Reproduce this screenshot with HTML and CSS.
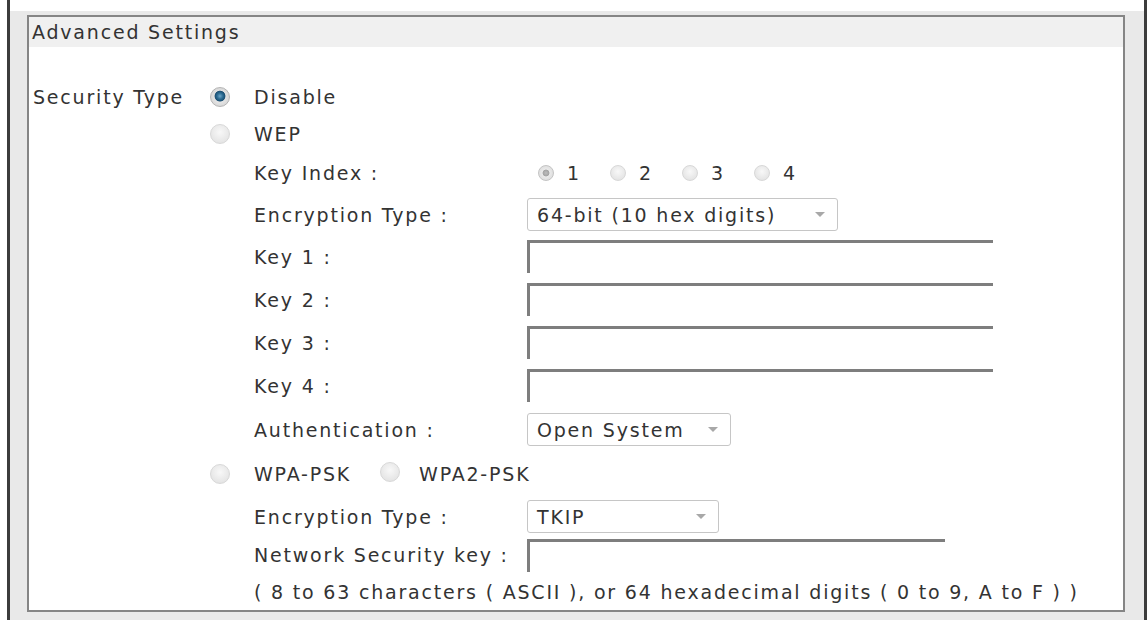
FILE: index.html
```html
<!DOCTYPE html>
<html>
<head>
    <title>Advanced Settings</title>
    <link rel="stylesheet" href="styles.css">
</head>
<body>
    <div class="page">
        <div class="panel">
            <div class="panelTitle">Advanced Settings</div>
            <form class="settings">
                <span class="c1 fieldName">Security Type</span>
                <input type="radio" name="security" class="c2 radio" checked>
                <span class="wide">Disable</span>

                <input type="radio" name="security" class="c2 radio">
                <span class="c3">WEP</span>

                <span class="c3">Key Index :</span>
                <div class="c4 keyIndex">
                    <label><input type="radio" name="keyIndex" class="radio small" checked disabled>1</label>
                    <label><input type="radio" name="keyIndex" class="radio small" disabled>2</label>
                    <label><input type="radio" name="keyIndex" class="radio small" disabled>3</label>
                    <label><input type="radio" name="keyIndex" class="radio small" disabled>4</label>
                </div>

                <span class="c3">Encryption Type :</span>
                <div class="c4 select wepType"><span>64-bit (10 hex digits)</span><i class="caret"></i></div>

                <span class="c3">Key 1 :</span>
                <input type="text" class="c4 keyField">
                <span class="c3">Key 2 :</span>
                <input type="text" class="c4 keyField">
                <span class="c3">Key 3 :</span>
                <input type="text" class="c4 keyField">
                <span class="c3">Key 4 :</span>
                <input type="text" class="c4 keyField">

                <span class="c3">Authentication :</span>
                <div class="c4 select authType"><span>Open System</span><i class="caret"></i></div>

                <input type="radio" name="security" class="c2 radio">
                <div class="wide wpaModes">
                    <span>WPA-PSK</span>
                    <input type="radio" name="wpaMode" class="radio">
                    <span>WPA2-PSK</span>
                </div>

                <span class="c3">Encryption Type :</span>
                <div class="c4 select wpaType"><span>TKIP</span><i class="caret"></i></div>

                <span class="c3">Network Security key :</span>
                <input type="text" class="c4 keyField pskField">

                <span class="wide note">( 8 to 63 characters ( ASCII ), or 64 hexadecimal digits ( 0 to 9, A to F ) )</span>
            </form>
        </div>
    </div>
</body>
</html>
```

FILE: styles.css
```css
body{
    margin: 0px;
    background-color: white;
    font-family: "DejaVu Sans", Verdana, sans-serif;
    font-size: 19px;
    letter-spacing: 1.8px;
    color: #333333;
}

.page{
    width: 1140px;
    height: 620px;
    box-sizing: border-box;
    margin-left: 7px;
    padding: 15px 19px 8px 17px;
    border-left: 3px solid #3c3c3c;
    border-right: 3px solid #3c3c3c;
    background: linear-gradient(white, white) top / 100% 11px no-repeat, #e9e9e9;
}

.panel{
    height: 597px;
    box-sizing: border-box;
    border: 2px solid #858585;
    background-color: white;
}

.panelTitle{
    height: 30px;
    line-height: 30px;
    padding-left: 3px;
    background-color: #f0f0f0;
}

.settings{
    display: grid;
    grid-template-columns: 181px 44px 273px 1fr;
    grid-template-rows: 36px 37px 42px 41px 43px 43px 43px 43px 45px 44px 41px 36px 38px;
    align-items: center;
    margin: 32px 0px 0px 0px;
}

.c1{ grid-column: 1; }
.c2{ grid-column: 2; }
.c3{ grid-column: 3; }
.c4{ grid-column: 4; }
.wide{ grid-column: 3 / 5; }

.fieldName{
    padding-left: 4px;
}

/* radios are drawn by hand so they look the same everywhere */
.radio{
    appearance: none;
    width: 20px;
    height: 20px;
    margin: 0px;
    border: 1px solid #d8d8d8;
    border-radius: 50%;
    background: radial-gradient(circle at 50% 40%, #f8f8f8, #dedede);
}

.radio:checked{
    border-color: #b4b4b4;
    background:
        radial-gradient(circle at 50% 45%, #6fa6c8 0px, #2a6b92 3px, #1b4f72 5px, transparent 5.8px),
        radial-gradient(circle, #f4f4f4, #cdcdcd);
}

.radio.small{
    width: 16px;
    height: 16px;
    margin-right: 13px;
}

.radio.small:checked{
    border-color: #c4c4c4;
    background:
        radial-gradient(circle, #bdbdbd 0px, #a4a4a4 3px, transparent 3.8px),
        radial-gradient(circle, #f6f6f6, #d6d6d6);
}

.keyIndex{
    display: flex;
    align-items: center;
    padding-left: 11px;
}

.keyIndex label{
    display: flex;
    align-items: center;
    width: 72px;
}

.select{
    display: flex;
    align-items: center;
    justify-content: space-between;
    height: 33px;
    box-sizing: border-box;
    padding: 0px 12px 0px 9px;
    border: 1px solid #c6c6c6;
    border-radius: 3px;
}

.wepType{ width: 311px; }
.authType{ width: 204px; }
.wpaType{ width: 192px; }

.caret{
    width: 0px;
    height: 0px;
    border-left: 5px solid transparent;
    border-right: 5px solid transparent;
    border-top: 5px solid #a8a8a8;
}

.keyField{
    width: 466px;
    height: 33px;
    box-sizing: border-box;
    margin: 0px;
    padding: 0px;
    border: none;
    border-top: 3px solid #7e7e7e;
    border-left: 3px solid #7e7e7e;
    outline: none;
}

.pskField{
    width: 418px;
}

.wpaModes{
    display: flex;
    align-items: center;
}

.wpaModes .radio{
    margin: 0px 19px 4px 29px;
}
```
